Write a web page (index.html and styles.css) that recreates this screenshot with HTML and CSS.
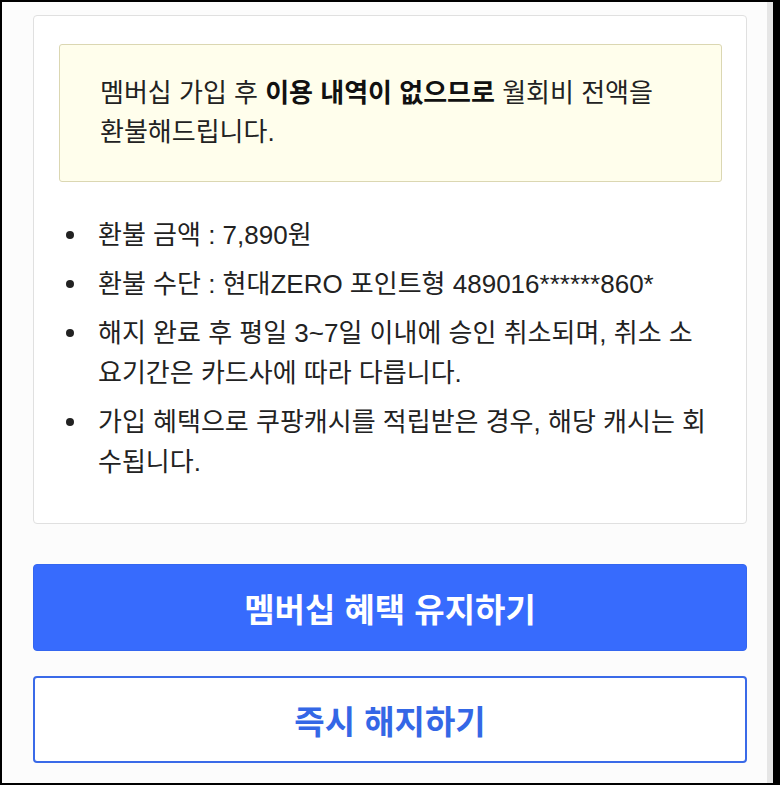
FILE: index.html
```html
<!DOCTYPE html>
<html lang="ko">
<head>
    <meta charset="UTF-8">
    <meta name="viewport" content="width=device-width, initial-scale=1.0">
    <title>멤버십 해지 - 환불 안내</title>
    <link rel="stylesheet" href="styles.css">
</head>
<body>
    <div class="frame">
        <main class="screen">
            <section class="refund-card">
                <div class="refund-notice">
                    <p>멤버십 가입 후 <strong>이용 내역이 없으므로</strong> 월회비 전액을 환불해드립니다.</p>
                </div>
                <ul class="refund-info">
                    <li>환불 금액 : 7,890원</li>
                    <li>환불 수단 : 현대ZERO 포인트형 489016******860*</li>
                    <li>해지 완료 후 평일 3~7일 이내에 승인 취소되며, 취소 소요기간은 카드사에 따라 다릅니다.</li>
                    <li>가입 혜택으로 쿠팡캐시를 적립받은 경우, 해당 캐시는 회수됩니다.</li>
                </ul>
            </section>

            <div class="actions">
                <button class="btn btn-keep">멤버십 혜택 유지하기</button>
                <button class="btn btn-cancel">즉시 해지하기</button>
            </div>
        </main>
        <div class="scroll-track"></div>
    </div>
</body>
</html>
```

FILE: styles.css
```css
* {
    box-sizing: border-box;
}

html, body {
    margin: 0;
    padding: 0;
}

body {
    font-family: "Liberation Sans", "Noto Sans CJK KR", sans-serif;
    color: #222;
    background: #000;
}

.frame {
    display: flex;
    height: 785px;
    border: 2px solid #000;
    border-right-width: 7px;
    background: #fcfcfc;
    overflow: hidden;
}

.screen {
    flex: 1;
    padding: 13px 20px 0 31px;
}

.scroll-track {
    width: 6px;
    background: #e6e6e6;
}

.refund-card {
    background: #fff;
    border: 1px solid #e0e0e0;
    border-radius: 4px;
    padding: 28px 24px 28px 25px;
}

.refund-notice {
    background: #fffeec;
    border: 1px solid #dbd7b2;
    border-radius: 3px;
    padding: 29px 40px;
}

.refund-notice p {
    margin: 0;
    font-size: 26px;
    line-height: 39px;
}

.refund-notice strong {
    font-weight: bold;
    color: #111;
}

.refund-info {
    list-style: none;
    margin: 33px 0 13px;
    padding: 0 8px 0 0;
    font-size: 26px;
    line-height: 40px;
}

.refund-info li {
    display: flex;
    margin-bottom: 9px;
}

.refund-info li:last-child {
    margin-bottom: 0;
}

.refund-info li::before {
    content: "";
    flex: none;
    width: 8px;
    height: 8px;
    margin: 16px 24px 0 7px;
    border-radius: 50%;
    background: #222;
}

.actions {
    display: flex;
    flex-direction: column;
    gap: 25px;
    margin-top: 40px;
}

.btn {
    height: 87px;
    border-radius: 4px;
    font-family: inherit;
    font-size: 33px;
    font-weight: bold;
    cursor: pointer;
}

.btn-keep {
    background: #376bfd;
    border: 1px solid #3466f0;
    color: #fff;
}

.btn-cancel {
    background: #fff;
    border: 2px solid #3a6ae8;
    color: #3467e6;
}
```
